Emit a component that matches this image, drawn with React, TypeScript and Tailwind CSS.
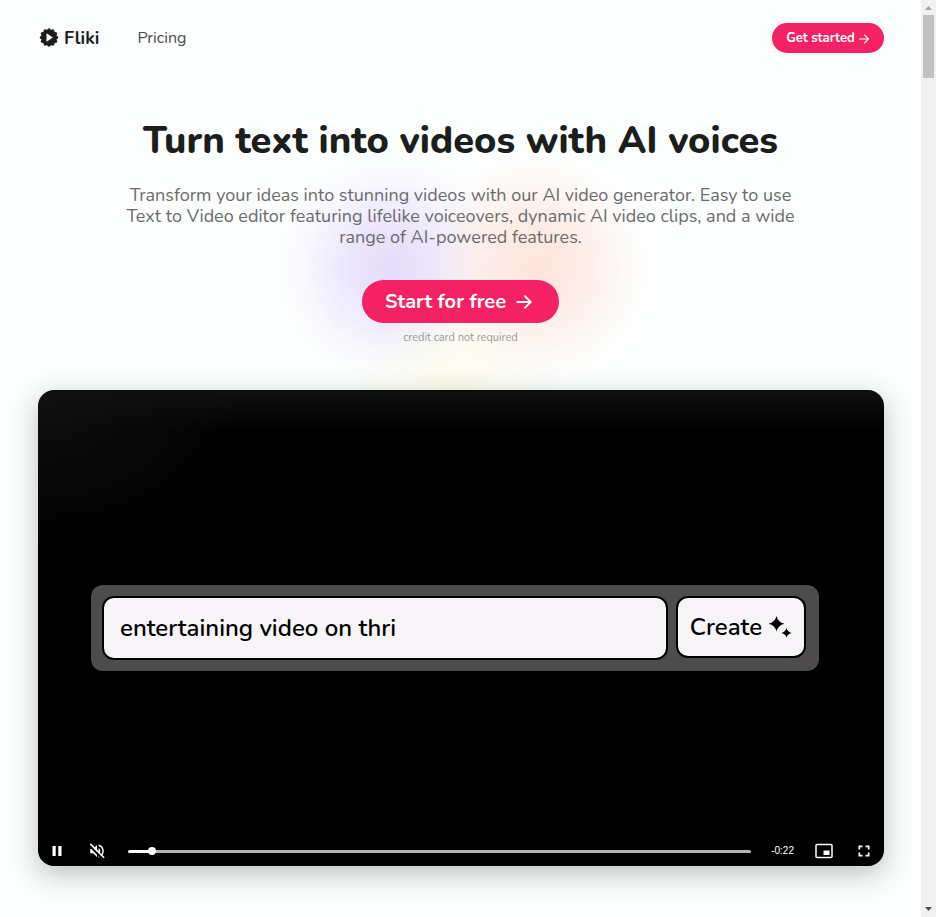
import type { ReactNode } from "react";

function ArrowIcon({ className }: { className: string }) {
  return (
    <svg viewBox="0 0 24 24" className={className} fill="none" stroke="currentColor" strokeWidth="2.4" aria-hidden="true">
      <path d="M2 12h19M12.500 3.500 21 12l-8.500 8.500" />
    </svg>
  );
}

function LogoMark() {
  const teeth = Array.from({ length: 12 }, (_, i) => (i * 30 * Math.PI) / 180);
  return (
    <svg viewBox="0 0 20 20" className="size-5" fill="#1c1d1d" aria-hidden="true">
      <circle cx="10" cy="9.500" r="8" />
      {teeth.map((a) => (
        <circle key={a} cx={10 + 7.5 * Math.cos(a)} cy={9.5 + 7.5 * Math.sin(a)} r="1.7" />
      ))}
      <path d="M7.500 5.200v8.600l6.300-4.300z" fill="#fff" />
    </svg>
  );
}

function ControlButton({ label, children }: { label: string; children: ReactNode }) {
  return (
    <button type="button" aria-label={label} className="flex h-5 w-5 items-center justify-center text-white">
      {children}
    </button>
  );
}

function Header() {
  return (
    <header className="flex h-[76px] items-center justify-between pl-[39px] pr-[37px]">
      <nav className="flex items-center gap-[38px]">
        <a href="#home" className="flex items-center gap-[5px] text-[18px] font-bold text-[#1c1d1d]">
          <LogoMark />
          <span>Fliki</span>
        </a>
        <a href="#pricing" className="text-[16px] text-[#4a4b4b]">Pricing</a>
      </nav>
      <button type="button" className="flex h-[30px] w-28 items-center justify-center gap-[3px] rounded-full bg-[#f42165] pt-px text-[13px] font-bold text-white">
        Get started
        <ArrowIcon className="size-3" />
      </button>
    </header>
  );
}

function Hero() {
  return (
    <section className="relative flex flex-col items-center pt-10 text-center">
      <div className="pointer-events-none absolute left-1/2 top-[76px] h-[260px] w-[390px] -translate-x-1/2">
        <div className="absolute left-[10px] top-0 size-[230px] bg-[radial-gradient(closest-side,#dccffbbb_0%,#dccffb88_35%,#dccffb22_75%,transparent)]" />
        <div className="absolute left-[155px] top-0 size-[230px] bg-[radial-gradient(closest-side,#ffd5c8aa_0%,#ffd5c877_35%,#ffd5c822_75%,transparent)]" />
        <div className="absolute left-[95px] top-[140px] size-[190px] bg-[radial-gradient(closest-side,#fff8d066_0%,#fff8d033_50%,transparent)]" />
      </div>
      <h1 className="relative text-[38px] font-extrabold leading-[49px] text-[#1c1d1d]">Turn text into videos with AI voices</h1>
      <p className="relative mt-5 w-[700px] max-w-full text-[18px] leading-[21px] text-[#6b6b6b]">
        Transform your ideas into stunning videos with our AI video generator. Easy to use Text to Video editor featuring
        lifelike voiceovers, dynamic AI video clips, and a wide range of AI-powered features.
      </p>
      <button type="button" className="relative mt-8 flex h-[43px] w-[197px] items-center justify-center gap-[9px] rounded-full bg-[#f42165] pr-[3px] text-[20px] font-bold text-white">
        Start for free
        <ArrowIcon className="size-[18px]" />
      </button>
      <p className="relative mt-[7px] text-[11px] leading-4 text-[#999]">credit card not required</p>
    </section>
  );
}

function Player() {
  return (
    <section aria-label="Product video" className="relative ml-[38px] mr-[37px] mt-11 flex aspect-video flex-col rounded-2xl bg-black bg-[radial-gradient(ellipse_220px_150px_at_0_10px,#0f0f10,transparent),linear-gradient(#0e100f,#000_40px)] shadow-[0_8px_28px_#1f35304d]">
      <div className="ml-[53px] mr-[65px] mt-[23%] grid grid-cols-[1fr_130px] gap-2 rounded-xl bg-[#4e4b4c] pb-[11px] pl-[11px] pr-[13px] pt-[11px]">
        <input
          type="text"
          aria-label="Video prompt"
          defaultValue="entertaining video on thri"
          className="h-16 min-w-0 rounded-xl border-2 border-black bg-[#f7f5f7] px-4 text-[24px] font-semibold text-black outline-none"
        />
        <button type="button" className="flex h-[62px] items-center justify-center gap-1.5 rounded-xl border-2 border-black bg-[#f7f5f7] text-[24px] font-semibold text-black">
          Create
          <svg viewBox="0 0 24 24" className="size-6" aria-hidden="true">
            <path d="M8.500 1Q9.800 7 16.500 8.800 9.800 10.500 8.500 16.500 7.200 10.500.5 8.800 7.200 7 8.500 1ZM18.500 13q.8 3.700 5 4.900-4.200 1.100-5 4.800-.8-3.700-5-4.800 4.200-1.200 5-4.900Z" />
          </svg>
        </button>
      </div>
      <div className="mt-auto flex h-[30px] items-center pl-[9px] pr-[10px]">
        <ControlButton label="Pause">
          <svg viewBox="0 0 16 16" className="size-4" fill="currentColor"><path d="M3.500 3h3.200v10H3.500zM9.300 3h3.200v10H9.300z" /></svg>
        </ControlButton>
        <div className="ml-5 mr-[21px]">
          <ControlButton label="Unmute">
            <svg viewBox="0 0 24 24" className="size-[18px]" fill="currentColor">
              <path d="M3 9v6h4l5 5V4L7 9z" />
              <path d="M14 8a4.500 4.500 0 0 1 0 8zM14 3.230v2.060a7 7 0 0 1 0 13.420v2.060a9 9 0 0 0 0-17.540z" />
              <path d="M1 4 20 23" stroke="#000" strokeWidth="2.500" />
              <path d="M3 2.500 21.500 21" stroke="currentColor" strokeWidth="2" />
            </svg>
          </ControlButton>
        </div>
        <input
          type="range"
          aria-label="Seek"
          min={0}
          max={1000}
          defaultValue={33}
          className="mt-px h-[3px] min-w-0 flex-1 appearance-none rounded-full bg-[linear-gradient(90deg,#fff_4%,#b3b3b3_4%)] [&::-webkit-slider-thumb]:size-2 [&::-webkit-slider-thumb]:appearance-none [&::-webkit-slider-thumb]:rounded-full [&::-webkit-slider-thumb]:bg-white"
        />
        <span className="mx-5 font-['Liberation_Sans',sans-serif] text-[10px] text-white">-0:22</span>
        <ControlButton label="Picture in picture">
          <svg viewBox="0 0 18 16" className="h-4 w-[18px]" fill="none" stroke="currentColor" strokeWidth="1.500">
            <rect x="1" y="1.500" width="16" height="13" rx="1" />
            <path d="M8.500 7.500h6V12h-6z" fill="currentColor" stroke="none" />
          </svg>
        </ControlButton>
        <div className="ml-5">
          <ControlButton label="Full screen">
            <svg viewBox="0 0 16 16" className="size-4" fill="none" stroke="currentColor" strokeWidth="1.700">
              <path d="M3.300 6.500V3.300h3.200M9.500 3.300h3.200v3.200M12.700 9.500v3.200H9.500M6.500 12.700H3.300V9.500" />
            </svg>
          </ControlButton>
        </div>
      </div>
    </section>
  );
}

function ScrollRail() {
  return (
    <aside aria-hidden="true" className="sticky top-0 flex h-screen w-[15px] shrink-0 flex-col items-center bg-[#f1f1f1]">
      <svg viewBox="0 0 15 15" className="size-[15px]" fill="#a3a3a3"><path d="M4 10 7.500 6 11 10z" /></svg>
      <div className="h-[63px] w-[11px] bg-[#c1c1c1]" />
      <svg viewBox="0 0 15 15" className="mt-auto size-[15px]" fill="#505050"><path d="M4 5h7L7.500 9z" /></svg>
    </aside>
  );
}

export default function App() {
  return (
    <div className="flex min-h-screen items-start bg-[#fcfefd] font-[Nunito,Lato,sans-serif]">
      <main className="min-w-0 flex-1">
        <Header />
        <Hero />
        <Player />
      </main>
      <ScrollRail />
    </div>
  );
}
